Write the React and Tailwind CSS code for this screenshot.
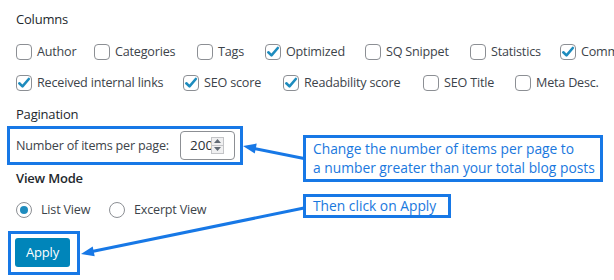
import React from "react";

function Box({ checked }) {
  return (
    <span className="flex h-[16px] w-[16px] shrink-0 items-center justify-center rounded-[4px] border border-[#8c8f94] bg-white">
      {checked && (
        <svg width="14" height="14" viewBox="0 0 14 14">
          <path d="M2.3 7.3 L5.5 10.4 L11.8 3" fill="none" stroke="#1e8cbe" strokeWidth="2.6" strokeLinecap="round" strokeLinejoin="round" />
        </svg>
      )}
    </span>
  );
}

function Item({ label, checked, w }) {
  return (
    <label className={`flex shrink-0 items-center gap-[5px] whitespace-nowrap ${w}`}>
      <Box checked={checked} />
      <span>{label}</span>
    </label>
  );
}

function Radio({ label, checked, w }) {
  return (
    <label className={`flex shrink-0 items-center gap-[9px] whitespace-nowrap ${w}`}>
      <span className="flex h-[16px] w-[16px] items-center justify-center rounded-full border border-[#8c8f94] bg-white">
        {checked && <span className="h-[8px] w-[8px] rounded-full bg-[#1e8cbe]" />}
      </span>
      <span>{label}</span>
    </label>
  );
}

export default function App() {
  const row1 = [
    ["Author", false, "w-[78px]"],
    ["Categories", false, "w-[103px]"],
    ["Tags", false, "w-[68px]"],
    ["Optimized", true, "w-[100px]"],
    ["SQ Snippet", false, "w-[105px]"],
    ["Statistics", false, "w-[90px]"],
    ["Comments", true, "w-[90px]"],
  ];
  const row2 = [
    ["Received internal links", true, "w-[167px]"],
    ["SEO score", true, "w-[100px]"],
    ["Readability score", true, "w-[140px]"],
    ["SEO Title", false, "w-[92px]"],
    ["Meta Desc.", false, "w-[90px]"],
  ];
  return (
    <div className="relative h-[280px] w-[614px] overflow-hidden bg-white pl-[16px] text-[12.6px] tracking-[-0.2px] text-[#3c434a] [font-family:'Open_Sans','Noto_Sans',sans-serif]">
      <div className="mt-[9px] h-[20px] text-[13px] leading-[20px] text-[#23282d]">Columns</div>
      <div className="mt-[13px] flex h-[20px] leading-[20px]">
        {row1.map(([l, c, w]) => (
          <Item key={l} label={l} checked={c} w={w} />
        ))}
      </div>
      <div className="mt-[11px] flex h-[20px] leading-[20px]">
        {row2.map(([l, c, w]) => (
          <Item key={l} label={l} checked={c} w={w} />
        ))}
      </div>
      <div className="mt-[11px] h-[20px] text-[13px] leading-[20px] text-[#23282d]">Pagination</div>
      <div className="ml-[-9px] mt-[2px] flex h-[39px] w-[236px] items-center border-[3px] border-[#1778e6] pl-[6px] pr-[5px]">
        <span className="whitespace-nowrap leading-[20px]">Number of items per page:</span>
        <div className="ml-auto flex h-[29px] w-[55px] items-center rounded-[4px] border border-[#8c8f94] bg-white pl-[9px]">
          <span className="w-[21px] overflow-hidden whitespace-nowrap text-[13.5px] tracking-normal text-[#2c3338]">200</span>
          <span className="flex h-[17px] w-[13px] flex-col border border-[#c3c4c7] bg-[#f0f0f1]">
            <span className="flex h-1/2 items-center justify-center border-b border-[#c3c4c7]">
              <svg width="7" height="4" viewBox="0 0 7 4"><path d="M0 4 L3.5 0 L7 4 Z" fill="#606a73" /></svg>
            </span>
            <span className="flex h-1/2 items-center justify-center">
              <svg width="7" height="4" viewBox="0 0 7 4"><path d="M0 0 L3.5 4 L7 0 Z" fill="#606a73" /></svg>
            </span>
          </span>
        </div>
      </div>
      <div className="mt-[3px] h-[20px] text-[13px] font-semibold leading-[20px] text-[#23282d]">View Mode</div>
      <div className="mt-[12px] flex h-[20px] leading-[20px]">
        <Radio label="List View" checked w="w-[93px]" />
        <Radio label="Excerpt View" w="w-[110px]" />
      </div>
      <div className="ml-[-8px] mt-[11px] h-[44px] w-[72px] border-[3px] border-[#1778e6] pl-[4px] pt-[4px]">
        <button className="h-[29px] w-[55px] rounded-[3px] bg-[#0085ba] text-[13px] text-white">Apply</button>
      </div>

      <div className="absolute left-[303px] top-[135px] h-[47px] w-[300px] border-[3px] border-[#1778e6] bg-white pl-[7px] pt-[1px] text-[13.8px] leading-[19px] tracking-normal text-[#1a78de]">
        <div>Change the number of items per page to</div>
        <div>a number greater than your total blog posts</div>
      </div>
      <div className="absolute left-[303px] top-[194px] h-[24px] w-[148px] border-[3px] border-[#1778e6] bg-white pl-[7px] text-[13.8px] leading-[18px] tracking-normal text-[#1a78de]">
        Then click on Apply
      </div>

      <svg className="pointer-events-none absolute left-0 top-0" width="614" height="280" viewBox="0 0 614 280">
        <line x1="304" y1="158.5" x2="254" y2="148.5" stroke="#1778e6" strokeWidth="3" />
        <polygon points="243,146 256.7,143.6 254.8,153.4" fill="#1778e6" />
        <line x1="304" y1="208" x2="92" y2="251.5" stroke="#1778e6" strokeWidth="3" />
        <polygon points="81,254 94.7,256.3 92.7,246.5" fill="#1778e6" />
      </svg>
    </div>
  );
}
